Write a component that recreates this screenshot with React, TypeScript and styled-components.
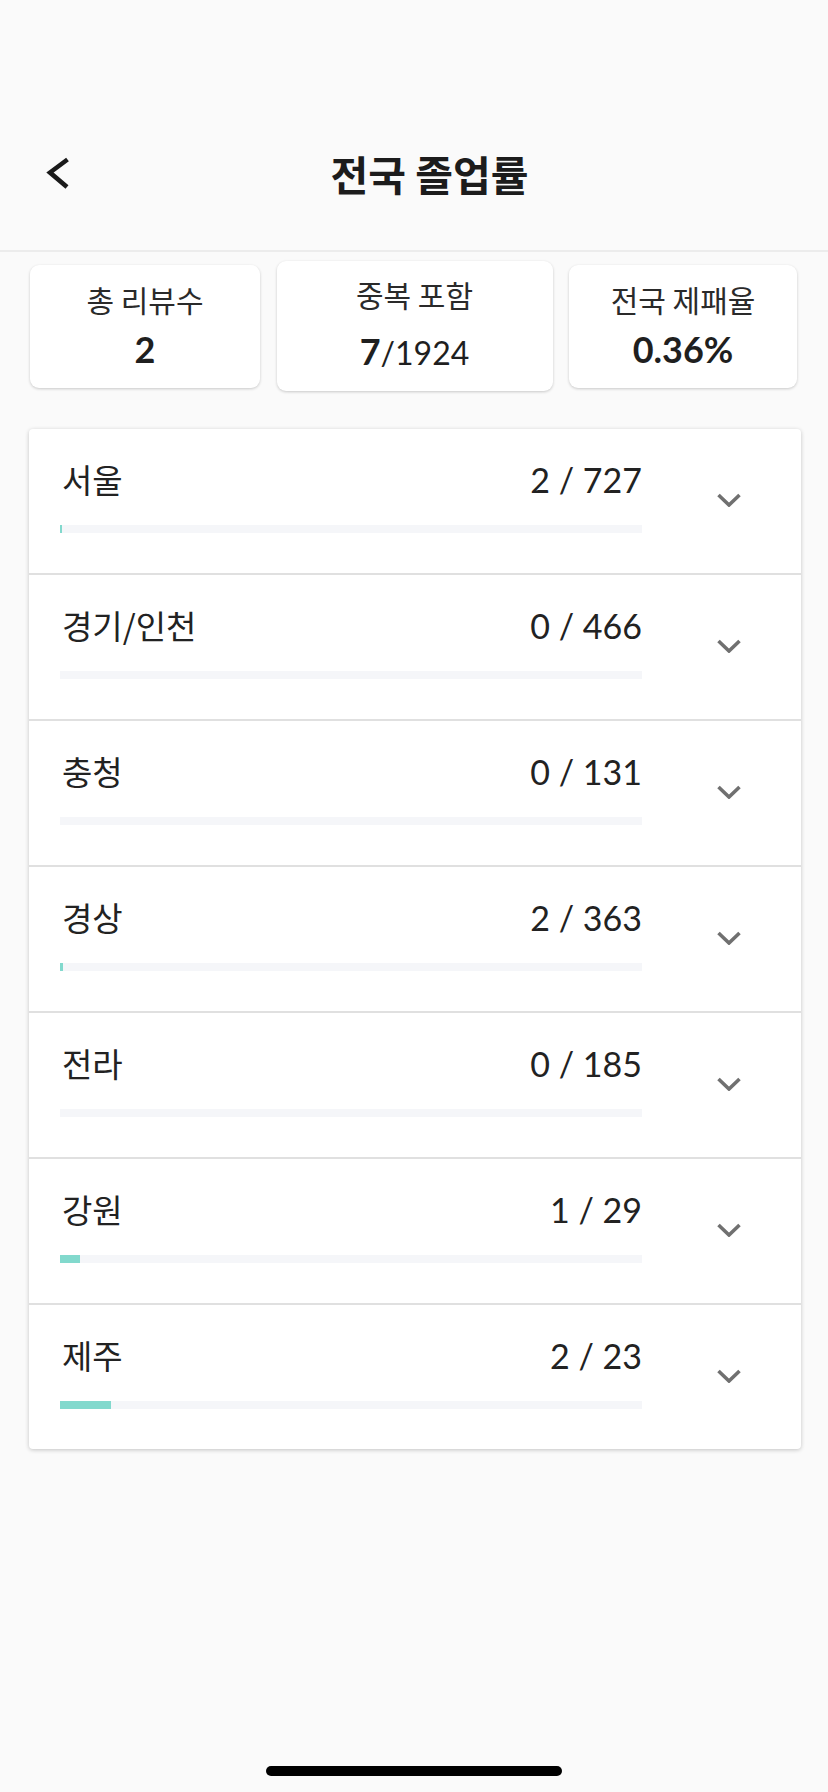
import React from "react";
import styled, { createGlobalStyle } from "styled-components";

const GlobalStyle = createGlobalStyle`
  html, body {
    margin: 0;
    padding: 0;
    background: #fafafa;
  }
  * {
    box-sizing: border-box;
  }
`;

const KR = `"Noto Sans CJK KR", "Noto Sans", sans-serif`;
const NUM = `Lato, "Noto Sans", sans-serif`;

type Region = { name: string; count: number; total: number };

const regions: Region[] = [
  { name: "서울", count: 2, total: 727 },
  { name: "경기/인천", count: 0, total: 466 },
  { name: "충청", count: 0, total: 131 },
  { name: "경상", count: 2, total: 363 },
  { name: "전라", count: 0, total: 185 },
  { name: "강원", count: 1, total: 29 },
  { name: "제주", count: 2, total: 23 },
];

const Page = styled.div`
  min-height: 100vh;
  display: flex;
  flex-direction: column;
  background: #fafafa;
`;

const Header = styled.header`
  height: 252px;
  padding: 96px 0 0 46px;
  display: flex;
  align-items: center;
  border-bottom: 2px solid #ececec;
`;

const BackButton = styled.button`
  border: 0;
  padding: 0;
  background: none;
  width: 26px;
  height: 36px;
  display: flex;
`;

const Title = styled.h1`
  flex: 1;
  margin: 0 41px 0 0;
  text-align: center;
  font-family: ${KR};
  font-size: 41px;
  font-weight: 700;
  color: #1c1c1c;
`;

const StatsRow = styled.section`
  display: grid;
  grid-template-columns: 230px 276px 228px;
  justify-content: space-between;
  align-items: center;
  padding: 9px 31px 0 30px;
`;

const StatCard = styled.div<{ $wide?: boolean }>`
  height: ${(p) => (p.$wide ? 130 : 123)}px;
  background: #fff;
  border-radius: 9px;
  box-shadow: 0 1px 3px rgba(0, 0, 0, 0.2);
  display: flex;
  flex-direction: column;
  align-items: center;
  justify-content: center;
  gap: ${(p) => (p.$wide ? 18 : 11)}px;
`;

const StatLabel = styled.div`
  font-family: ${KR};
  font-size: 30px;
  line-height: 34px;
  color: #2a2a2a;
`;

const StatValue = styled.div`
  font-family: ${NUM};
  font-size: 36px;
  line-height: 44px;
  font-weight: 700;
  color: #1f1f1f;
`;

const StatTotal = styled.span`
  font-weight: 400;
  font-size: 32px;
`;

const ListCard = styled.section`
  margin: 38px 27px 0 29px;
  background: #fff;
  border-radius: 4px;
  box-shadow: 0 1px 4px rgba(0, 0, 0, 0.22);
  overflow: hidden;
`;

const Row = styled.div<{ $last?: boolean }>`
  height: ${(p) => (p.$last ? 144 : 146)}px;
  display: flex;
  align-items: center;
  border-bottom: ${(p) => (p.$last ? "none" : "2px solid #e0e0e0")};
`;

const RowMain = styled.div`
  width: 582px;
  margin-left: 31px;
  align-self: flex-start;
  padding-top: 28px;
  display: flex;
  flex-direction: column;
`;

const RowTop = styled.div`
  height: 44px;
  display: flex;
  align-items: center;
  justify-content: space-between;
`;

const RegionName = styled.span`
  font-family: ${KR};
  font-size: 33px;
  color: #222;
  padding-left: 2px;
`;

const RegionCount = styled.span`
  font-family: ${NUM};
  font-size: 34px;
  color: #222;
`;

const Track = styled.div`
  margin-top: 24px;
  height: 8px;
  background: #f5f6f9;
`;

const Fill = styled.div`
  height: 100%;
  background: #82d9cd;
`;

const Expand = styled.div`
  margin-left: 75px;
  width: 24px;
  height: 14px;
  display: flex;
  margin-top: -2px;
`;

const HomeIndicator = styled.div`
  margin: auto auto 16px;
  width: 296px;
  height: 10px;
  border-radius: 5px;
  background: #000;
`;

function RegionRow({ region, last }: { region: Region; last: boolean }) {
  const pct = (region.count / region.total) * 100;
  return (
    <Row $last={last}>
      <RowMain>
        <RowTop>
          <RegionName>{region.name}</RegionName>
          <RegionCount>
            {region.count} / {region.total}
          </RegionCount>
        </RowTop>
        <Track>
          <Fill style={{ width: `${pct}%`, minWidth: region.count > 0 ? 2 : 0 }} />
        </Track>
      </RowMain>
      <Expand>
        <svg width="24" height="14" viewBox="0 0 24 14">
          <polyline
            points="1.5,2 12,12 22.5,2"
            fill="none"
            stroke="#707070"
            strokeWidth="3.6"
          />
        </svg>
      </Expand>
    </Row>
  );
}

export default function App() {
  return (
    <Page>
      <GlobalStyle />
      <Header>
        <BackButton aria-label="back">
          <svg width="26" height="36" viewBox="0 0 26 36">
            <polyline
              points="21.5,4.5 4,17.5 21,32"
              fill="none"
              stroke="#1a1a1a"
              strokeWidth="4.6"
            />
          </svg>
        </BackButton>
        <Title>전국 졸업률</Title>
      </Header>

      <StatsRow>
        <StatCard>
          <StatLabel>총 리뷰수</StatLabel>
          <StatValue>2</StatValue>
        </StatCard>
        <StatCard $wide>
          <StatLabel>중복 포함</StatLabel>
          <StatValue>
            7<StatTotal>/1924</StatTotal>
          </StatValue>
        </StatCard>
        <StatCard>
          <StatLabel>전국 제패율</StatLabel>
          <StatValue>0.36%</StatValue>
        </StatCard>
      </StatsRow>

      <ListCard>
        {regions.map((r, i) => (
          <RegionRow key={r.name} region={r} last={i === regions.length - 1} />
        ))}
      </ListCard>

      <HomeIndicator />
    </Page>
  );
}
